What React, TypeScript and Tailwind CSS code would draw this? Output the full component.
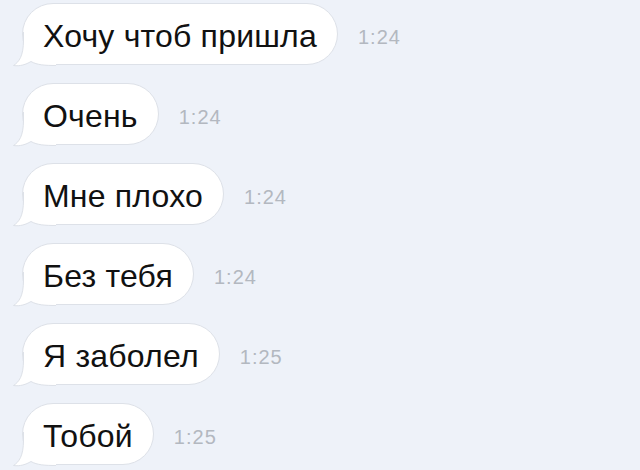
const messages = [
  { text: "Хочу чтоб пришла", time: "1:24" },
  { text: "Очень", time: "1:24" },
  { text: "Мне плохо", time: "1:24" },
  { text: "Без тебя", time: "1:24" },
  { text: "Я заболел", time: "1:25" },
  { text: "Тобой", time: "1:25" },
];

function Tail() {
  return (
    <svg
      className="absolute left-[-12px] top-[28px] overflow-visible"
      width="50"
      height="36"
      viewBox="-12 28 50 36"
    >
      <path
        d="M0.5 28 L0.5 36 C0.5 52 -4 58 -9.5 61.5 C-3 62.5 3 60.5 8 57.5 C14 61 22 61.5 33 61.5 L33 28 Z"
        fill="#ffffff"
      />
      <path
        d="M0.5 28 L0.5 36 C0.5 52 -4 58 -9.5 61.5 C-3 62.5 3 60.5 8 57.5 C14 61 22 61.5 33 61.5"
        fill="none"
        stroke="#dde1e8"
        strokeWidth="1"
      />
    </svg>
  );
}

function Bubble({ text, time }: { text: string; time: string }) {
  return (
    <div className="flex items-center">
      <div className="relative flex h-[62px] items-center rounded-[31px] border border-[#dde1e8] bg-white px-[20px] pt-[4px]">
        <Tail />
        <span className="relative text-[32px] leading-none tracking-[0.2px] text-[#111111]">{text}</span>
      </div>
      <span className="ml-[20px] pt-[6px] text-[20px] leading-none tracking-[1px] text-[#b3b8c0]">
        {time}
      </span>
    </div>
  );
}

export default function App() {
  return (
    <div
      className="flex h-[470px] w-[640px] flex-col gap-[18px] overflow-hidden bg-[#eef2f9] pl-[22px] pt-[3px]"
      style={{ fontFamily: '"Liberation Sans", Arial, sans-serif' }}
    >
      {messages.map((m, i) => (
        <Bubble key={i} text={m.text} time={m.time} />
      ))}
    </div>
  );
}
